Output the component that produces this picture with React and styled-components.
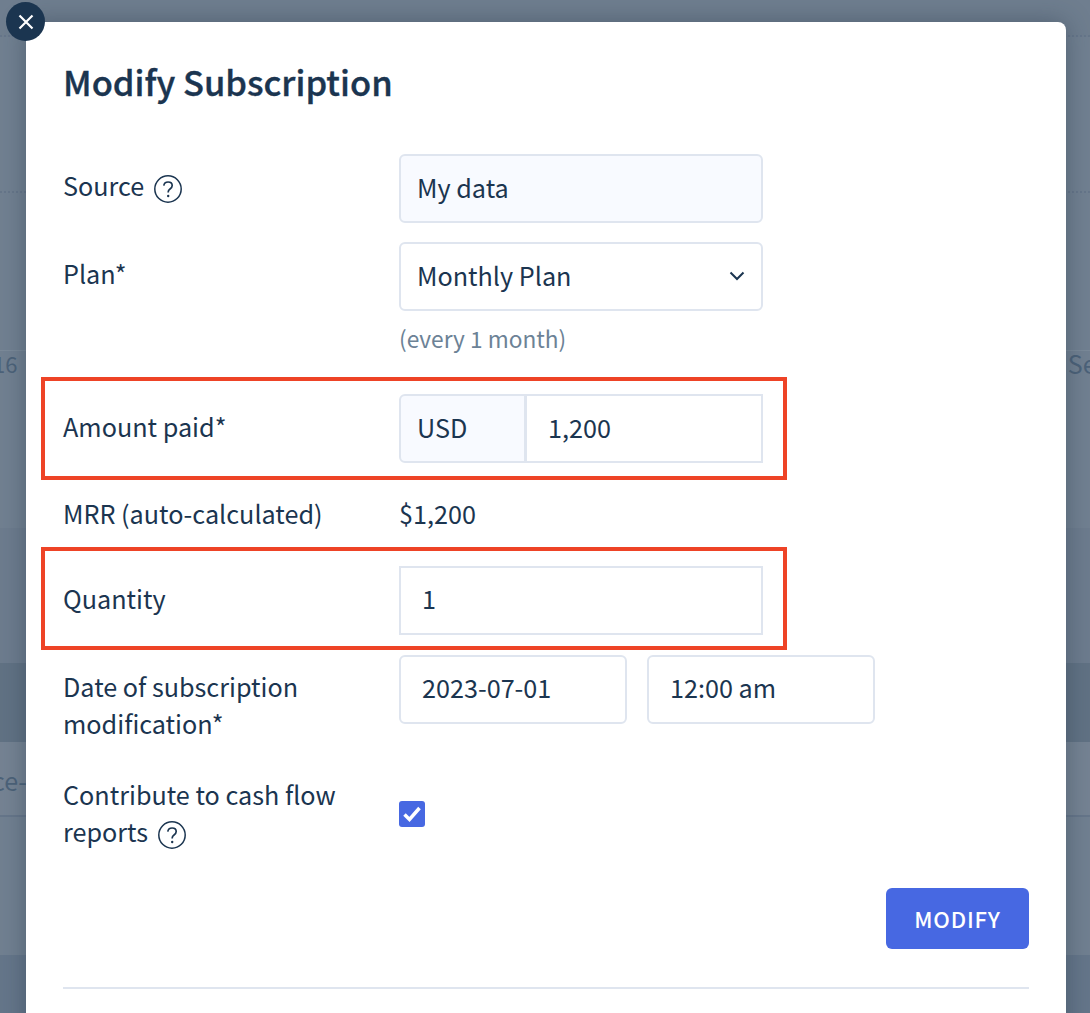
import React from "react";
import styled, { createGlobalStyle } from "styled-components";

const Global = createGlobalStyle`
  html, body { margin: 0; padding: 0; background: #718091; }
  * { box-sizing: border-box; }
`;

const INK = "#1b3550";
const LINE = "#dfe5ef";
const TINT = "#f8faff";

const Page = styled.div`
  position: relative;
  width: 1090px;
  height: 1013px;
  overflow: hidden;
  font-family: "Noto Sans CJK JP", "Noto Sans", sans-serif;
  color: ${INK};
`;

const Backdrop = styled.div`
  position: absolute;
  inset: 0;
  display: flex;
  flex-direction: column;
  background: #718091;
`;

const Band = styled.div`
  height: ${(p) => p.$h}px;
  flex: none;
  background: ${(p) => p.$bg || "transparent"};
  border-bottom: ${(p) => p.$line || "none"};
  display: flex;
  justify-content: space-between;
  align-items: flex-start;
  overflow: hidden;
`;

const GhostText = styled.span`
  font-size: ${(p) => p.$size || 25}px;
  line-height: 28px;
  margin-top: ${(p) => p.$top || 0}px;
  margin-left: ${(p) => p.$ml || 0}px;
  margin-right: ${(p) => p.$mr || 0}px;
  color: #4c6279;
  white-space: nowrap;
`;

const Modal = styled.section`
  position: absolute;
  left: 26px;
  top: 22px;
  width: 1040px;
  height: 1100px;
  padding: 0 37px 0 38px;
  background: #fff;
  border-radius: 8px;
  box-shadow: 0 0 26px rgba(36, 52, 70, 0.42);
`;

const CloseButton = styled.button`
  position: absolute;
  left: -20px;
  top: -20px;
  width: 39px;
  height: 39px;
  padding: 0;
  border: none;
  border-radius: 50%;
  background: ${INK};
  display: flex;
  align-items: center;
  justify-content: center;
`;

const Title = styled.h1`
  margin: 0 0 0 -1px;
  padding-top: 34px;
  height: 132px;
  font-size: 34.5px;
  line-height: 50px;
  font-weight: 500;
  -webkit-text-stroke: 0.35px ${INK};
  color: ${INK};
`;

const Row = styled.div`
  display: grid;
  grid-template-columns: 335px 1fr;
  margin-top: ${(p) => p.$mt || 0}px;
`;

const Highlight = styled.div`
  display: grid;
  grid-template-columns: 335px 1fr;
  width: 746px;
  margin-left: -23px;
  margin-top: ${(p) => p.$mt || 0}px;
  padding: ${(p) => p.$pt}px 20px ${(p) => p.$pb}px 19px;
  border: 4px solid #ee4326;
`;

const Label = styled.div`
  margin-left: -1px;
  padding-top: ${(p) => (p.$pt === undefined ? 13 : p.$pt)}px;
  font-size: 25.2px;
  line-height: 37.5px;
  color: ${INK};
`;

const Control = styled.div`
  width: 364px;
`;

const Field = styled.div`
  height: ${(p) => p.$h || 69}px;
  width: ${(p) => (p.$w ? `${p.$w}px` : "auto")};
  flex: ${(p) => (p.$grow ? "1" : "none")};
  margin-left: ${(p) => p.$ml || 0}px;
  padding: 0 16px 2px ${(p) => p.$pl || 16}px;
  display: flex;
  align-items: center;
  justify-content: space-between;
  border: 2px solid ${LINE};
  border-radius: ${(p) => p.$radius || "6px"};
  background: ${(p) => (p.$tint ? TINT : "#fff")};
  font-size: 25.2px;
  line-height: 37.5px;
  color: ${INK};
`;

const Note = styled.div`
  margin-top: 10px;
  font-size: 22.7px;
  line-height: 36px;
  color: #6c8296;
`;

const Joined = styled.div`
  display: flex;
`;

const Pair = styled.div`
  display: flex;
  gap: 20px;
`;

const Value = styled.div`
  font-size: 25.2px;
  line-height: 37.5px;
  color: ${INK};
`;

const Check = styled.div`
  width: 26px;
  height: 26px;
  margin-top: 38px;
  border-radius: 3px;
  background: #4768e2;
  display: flex;
  align-items: center;
  justify-content: center;
`;

const Actions = styled.div`
  display: flex;
  justify-content: flex-end;
  margin-top: 37px;
`;

const PrimaryButton = styled.button`
  width: 143px;
  height: 61px;
  border: none;
  border-radius: 6px;
  background: #4768e2;
  color: #fff;
  font-family: inherit;
  font-size: 22px;
  font-weight: 500;
  letter-spacing: 0.8px;
`;

const Divider = styled.hr`
  margin: 38px 0 0 -1px;
  border: none;
  height: 2px;
  background: ${LINE};
`;

const HelpSvg = styled.svg`
  display: inline-block;
  vertical-align: -7px;
  margin-left: ${(p) => p.$ml}px;
`;

const Help = ({ ml = 10 }) => (
  <HelpSvg $ml={ml} width="28" height="28" viewBox="0 0 28 28" fill="none" aria-hidden="true">
    <circle cx="14" cy="14" r="13.2" stroke={INK} strokeWidth="1.5" />
    <path d="M9.8 10.6c.3-2.3 2-3.6 4.3-3.6 2.400 0 4.100 1.400 4.100 3.500 0 1.700-.9 2.600-2.200 3.500-1.200.8-1.800 1.500-1.800 3v.6" stroke={INK} strokeWidth="1.700" />
    <circle cx="14.200" cy="21" r="1.200" fill={INK} />
  </HelpSvg>
);

const Chevron = () => (
  <svg width="16" height="10" viewBox="0 0 16 10" fill="none" aria-hidden="true">
    <path d="M1.500 1.500 8 8l6.500-6.500" stroke={INK} strokeWidth="2" />
  </svg>
);

export default function App() {
  return (
    <Page>
      <Global />
      <Backdrop>
        <Band $h={37} $line="2px dotted #66768a" $bg="#6f7e8f" />
        <Band $h={156} $line="2px dotted #66768a" />
        <Band $h={158} $line="1px solid #7b8a99" />
        <Band $h={177}>
          <GhostText $size={22} $ml={-7} $top={-2}>16</GhostText>
          <GhostText $top={-2} $mr={-22}>Sep</GhostText>
        </Band>
        <Band $h={135} $bg="#6d7c8e" />
        <Band $h={79} $bg="#617284" />
        <Band $h={75} $bg="#758393" $line="2px solid #66768a">
          <GhostText $top={24} $ml={-8}>ce-</GhostText>
        </Band>
        <Band $h={138} />
        <Band $h={60} $bg="#65768a" />
      </Backdrop>

      <Modal>
        <CloseButton aria-label="Close">
          <svg width="16" height="16" viewBox="0 0 16 16" fill="none">
            <path d="M1.500 1.500l13 13M14.500 1.500l-13 13" stroke="#fff" strokeWidth="2.200" />
          </svg>
        </CloseButton>
        <Title>Modify Subscription</Title>

        <Row>
          <Label>
            Source
            <Help />
          </Label>
          <Control>
            <Field $tint>My data</Field>
          </Control>
        </Row>

        <Row $mt={19}>
          <Label>Plan*</Label>
          <Control>
            <Field>
              Monthly Plan
              <Chevron />
            </Field>
            <Note>(every 1 month)</Note>
          </Control>
        </Row>

        <Highlight $mt={20} $pt={13} $pb={13}>
          <Label $pt={14}>Amount paid*</Label>
          <Joined>
            <Field $w={127} $tint $radius="6px 0 0 6px">USD</Field>
            <Field $grow $pl={21} $ml={-1} $radius="0">1,200</Field>
          </Joined>
        </Highlight>

        <Row $mt={15}>
          <Label $pt={0}>MRR (auto-calculated)</Label>
          <Value>$1,200</Value>
        </Row>

        <Highlight $mt={14} $pt={15} $pb={11}>
          <Label $pt={14}>Quantity</Label>
          <Field $pl={21} $radius="0">1</Field>
        </Highlight>

        <Row $mt={5}>
          <Label>
            Date of subscription
            <br />
            modification*
          </Label>
          <Pair>
            <Field $w={228} $pl={21}>2023-07-01</Field>
            <Field $w={228} $pl={21}>12:00 am</Field>
          </Pair>
        </Row>

        <Row $mt={20}>
          <Label>
            Contribute to cash flow
            <br />
            reports
            <Help ml={10} />
          </Label>
          <Check>
            <svg width="20" height="18" viewBox="0 0 20 18" fill="none">
              <path d="M2.500 9.500l5 5L17.500 3" stroke="#fff" strokeWidth="3.500" />
            </svg>
          </Check>
        </Row>

        <Actions>
          <PrimaryButton>MODIFY</PrimaryButton>
        </Actions>
        <Divider />
      </Modal>
    </Page>
  );
}
